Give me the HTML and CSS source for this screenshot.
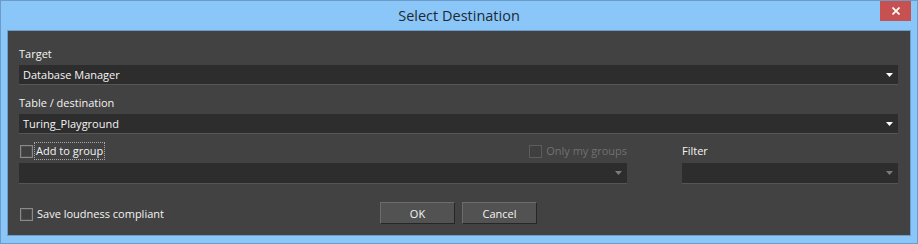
FILE: index.html
```html
<!DOCTYPE html>
<html lang="en">
<head>
    <meta charset="UTF-8">
    <title>Select Destination</title>
    <link rel="stylesheet" href="styles.css">
</head>
<body>
    <div class="window">
        <div class="titlebar">
            <span></span>
            <h1 class="title">Select Destination</h1>
            <button class="close" type="button" aria-label="Close">
                <svg width="8" height="8" viewBox="0 0 8 8"><path d="M0.5 0.5 L7.5 7.5 M7.5 0.5 L0.5 7.5" stroke="#fff" stroke-width="1.7"/></svg>
            </button>
        </div>
        <div class="content">
            <div class="label">Target</div>
            <div class="select">
                <span>Database Manager</span>
                <svg class="arrow" width="7" height="4" viewBox="0 0 7 4"><polygon points="0,0 7,0 3.5,4" fill="#fff"/></svg>
            </div>

            <div class="label spaced">Table / destination</div>
            <div class="select">
                <span>Turing_Playground</span>
                <svg class="arrow" width="7" height="4" viewBox="0 0 7 4"><polygon points="0,0 7,0 3.5,4" fill="#fff"/></svg>
            </div>

            <div class="groups">
                <div class="check-row">
                    <label class="check">
                        <span class="box"></span>
                        <span class="focus">Add to group</span>
                    </label>
                    <label class="check disabled">
                        <span class="box"></span>
                        <span>Only my groups</span>
                    </label>
                </div>
                <div class="label">Filter</div>
                <div class="select combo disabled">
                    <span></span>
                    <svg class="arrow" width="7" height="4" viewBox="0 0 7 4"><polygon points="0,0 7,0 3.5,4" fill="#7b7b7b"/></svg>
                </div>
                <div class="select combo disabled">
                    <span></span>
                    <svg class="arrow" width="7" height="4" viewBox="0 0 7 4"><polygon points="0,0 7,0 3.5,4" fill="#7b7b7b"/></svg>
                </div>
            </div>

            <div class="footer">
                <label class="check loud">
                    <span class="box"></span>
                    <span>Save loudness compliant</span>
                </label>
                <div class="buttons">
                    <button type="button" class="btn">OK</button>
                    <button type="button" class="btn">Cancel</button>
                </div>
                <span></span>
            </div>
        </div>
    </div>
</body>
</html>
```

FILE: styles.css
```css
body {
    margin: 0;
    padding: 0;
    font-family: "Open Sans", "Noto Sans", sans-serif;
    font-size: 11px;
    background-color: #8bc6f9;
}

.window {
    width: 918px;
    height: 244px;
    box-sizing: border-box;
    border: 1px solid #6b9bc9;
    background-color: #8bc6f9;
}

/* Title bar */
.titlebar {
    display: grid;
    grid-template-columns: 1fr auto 1fr;
    height: 29px;
}

.title {
    margin: 0;
    font-size: 14.5px;
    font-weight: normal;
    line-height: 29px;
    color: #1e2a33;
}

.close {
    justify-self: end;
    width: 31px;
    height: 20px;
    margin-right: 6px;
    padding: 0;
    border: none;
    background-color: #c75050;
    display: flex;
    align-items: center;
    justify-content: center;
}

/* Dialog body */
.content {
    margin: 0 6px;
    height: 206px;
    box-sizing: border-box;
    border: 1px solid #6c9dcc;
    background-color: #414241;
    padding: 15px 12px 11px 11px;
    color: #f4f4f4;
}

.label {
    line-height: 16px;
    margin-bottom: 3px;
}

.label.spaced {
    margin-top: 10px;
}

.select {
    height: 19px;
    background-color: #2d2d2d;
    border-bottom: 1px solid #565656;
    display: flex;
    align-items: center;
    justify-content: space-between;
    padding: 0 5px 0 4px;
}

.select span {
    line-height: 19px;
}

.arrow {
    display: block;
}

.combo {
    height: 20px;
}

/* Group row */
.groups {
    display: grid;
    grid-template-columns: 1fr 216px;
    column-gap: 55px;
    row-gap: 4px;
    margin-top: 9px;
}

.groups .label {
    margin: 0;
}

.check-row {
    display: flex;
    justify-content: space-between;
    align-items: center;
    height: 16px;
}

.check {
    display: flex;
    align-items: center;
    line-height: 16px;
}

.box {
    width: 11px;
    height: 11px;
    border: 1px solid #8a8a8a;
    box-shadow: inset 0 0 0 1px #4e4e4e;
    background-color: #3f3f3f;
    margin: 0 2px 0 1px;
}

.focus {
    outline: 1px dotted #a8a8a8;
    padding: 0 1px;
}

.check.disabled {
    color: #717171;
}

.check.disabled .box {
    border-color: #5c5c5c;
    box-shadow: none;
    margin-right: 4px;
}

/* Footer */
.footer {
    display: grid;
    grid-template-columns: 1fr auto 1fr;
    margin-top: 18px;
}

.loud {
    align-self: end;
    margin-bottom: 2px;
}

.loud .box {
    margin-right: 4px;
}

.buttons {
    display: flex;
    gap: 7px;
}

.btn {
    width: 75px;
    height: 22px;
    padding: 0;
    font-family: "Open Sans", "Noto Sans", sans-serif;
    font-size: 11px;
    color: #f4f4f4;
    background-color: #525252;
    border: 1px solid;
    border-color: #6c6c6c #262626 #262626 #6c6c6c;
}
```
